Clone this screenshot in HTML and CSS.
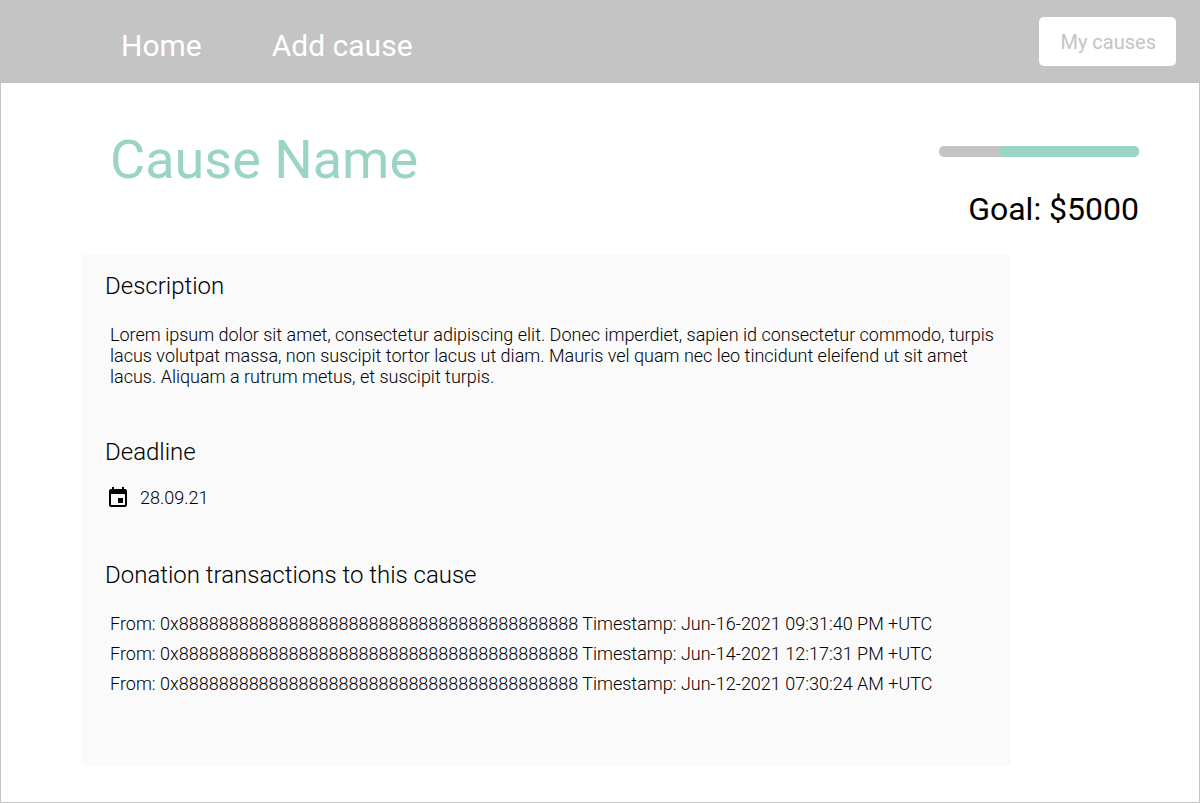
FILE: index.html
```html
<!DOCTYPE html>
<html lang="en">
<head>
  <meta charset="utf-8">
  <meta name="viewport" content="width=device-width, initial-scale=1">
  <title>Cause Name</title>
  <link rel="stylesheet" href="styles.css">
</head>
<body class="page">
  <header class="topbar">
    <nav class="topbar-nav">
      <a class="nav-link" href="#home">Home</a>
      <a class="nav-link" href="#add">Add cause</a>
    </nav>
    <button class="my-causes" type="button">My causes</button>
  </header>

  <main class="content">
    <div class="hero">
      <h1 class="cause-name">Cause Name</h1>
      <div class="funding">
        <div class="progress" role="progressbar" aria-label="Donations raised" aria-valuemin="0" aria-valuemax="100" aria-valuenow="70">
          <div class="progress-fill" style="width: 70%"></div>
        </div>
        <p class="goal">Goal: $5000</p>
      </div>
    </div>

    <div class="panel">
      <section class="section">
        <h2 class="section-title">Description</h2>
        <p class="description">Lorem ipsum dolor sit amet, consectetur adipiscing elit. Donec imperdiet, sapien id consectetur commodo, turpis lacus volutpat massa, non suscipit tortor lacus ut diam. Mauris vel quam nec leo tincidunt eleifend ut sit amet lacus. Aliquam a rutrum metus, et suscipit turpis.</p>
      </section>

      <section class="section">
        <h2 class="section-title">Deadline</h2>
        <div class="deadline">
          <svg class="icon" viewBox="0 0 24 24" aria-hidden="true"><path d="M17 12h-5v5h5v-5zM16 1v2H8V1H6v2H5c-1.110 0-1.990.9-1.990 2L3 19c0 1.100.89 2 2 2h14c1.100 0 2-.9 2-2V5c0-1.100-.9-2-2-2h-1V1h-2zm3 18H5V8h14v11z"/></svg>
          <time datetime="2021-09-28">28.09.21</time>
        </div>
      </section>

      <section class="section">
        <h2 class="section-title">Donation transactions to this cause</h2>
        <ul class="transactions">
          <li>From: 0x8888888888888888888888888888888888888888 Timestamp: Jun-16-2021 09:31:40 PM +UTC</li>
          <li>From: 0x8888888888888888888888888888888888888888 Timestamp: Jun-14-2021 12:17:31 PM +UTC</li>
          <li>From: 0x8888888888888888888888888888888888888888 Timestamp: Jun-12-2021 07:30:24 AM +UTC</li>
        </ul>
      </section>
    </div>
  </main>
</body>
</html>
```
FILE: styles.css
```css
* {
  box-sizing: border-box;
}

.page {
  min-height: 100vh;
  margin: 0;
  border: 1px solid #c4c4c4;
  background: #fff;
  color: #000;
  font-family: Roboto, "Liberation Sans", sans-serif;
}

.topbar {
  display: flex;
  align-items: center;
  justify-content: space-between;
  padding: 16px 23px 17px 120px;
  background: #c4c4c4;
}

.topbar-nav {
  display: flex;
  gap: 70px;
  padding-top: 8px;
}

.nav-link {
  color: #fff;
  font-size: 30px;
  line-height: 35px;
  text-decoration: none;
}

.my-causes {
  padding: 14px 20px 12px 21px;
  border: 0;
  border-radius: 5px;
  background: #fff;
  color: #c4c4c4;
  font-family: inherit;
  font-size: 20px;
  line-height: 23px;
}

.content {
  padding: 45px 60px 36px 80px;
}

.hero {
  display: flex;
  align-items: flex-start;
  justify-content: space-between;
  padding-left: 29px;
}

.cause-name {
  margin: 0;
  color: #99d4c5;
  font-size: 54px;
  font-weight: 400;
  line-height: 63px;
}

.funding {
  display: flex;
  flex-direction: column;
  align-items: flex-end;
  gap: 33px;
  padding-top: 18px;
}

.progress {
  display: flex;
  justify-content: flex-end;
  width: 200px;
  height: 11px;
  border-radius: 5px;
  background: #c4c4c4;
}

.progress-fill {
  border-radius: 5px;
  background: #99d4c5;
}

.goal {
  margin: 0;
  font-size: 32px;
  line-height: 38px;
}

.panel {
  display: flex;
  flex-direction: column;
  gap: 51px;
  max-width: 930px;
  margin-top: 26px;
  padding: 18px 16px 67px 24px;
  border-radius: 5px;
  background: #fafafa;
  font-size: 18px;
  font-weight: 300;
}

.section-title {
  margin: 0 0 20px;
  font-size: 24px;
  font-weight: 300;
  line-height: 28px;
}

.description {
  margin: 0;
  padding: 4px 0 0 5px;
  line-height: 21px;
}

.deadline {
  display: flex;
  align-items: center;
  gap: 10px;
  padding-left: 1px;
  line-height: 24px;
}

.icon {
  width: 24px;
  height: 24px;
}

.transactions {
  margin: 0;
  padding: 0 0 0 5px;
  line-height: 30px;
  list-style: none;
}
```
